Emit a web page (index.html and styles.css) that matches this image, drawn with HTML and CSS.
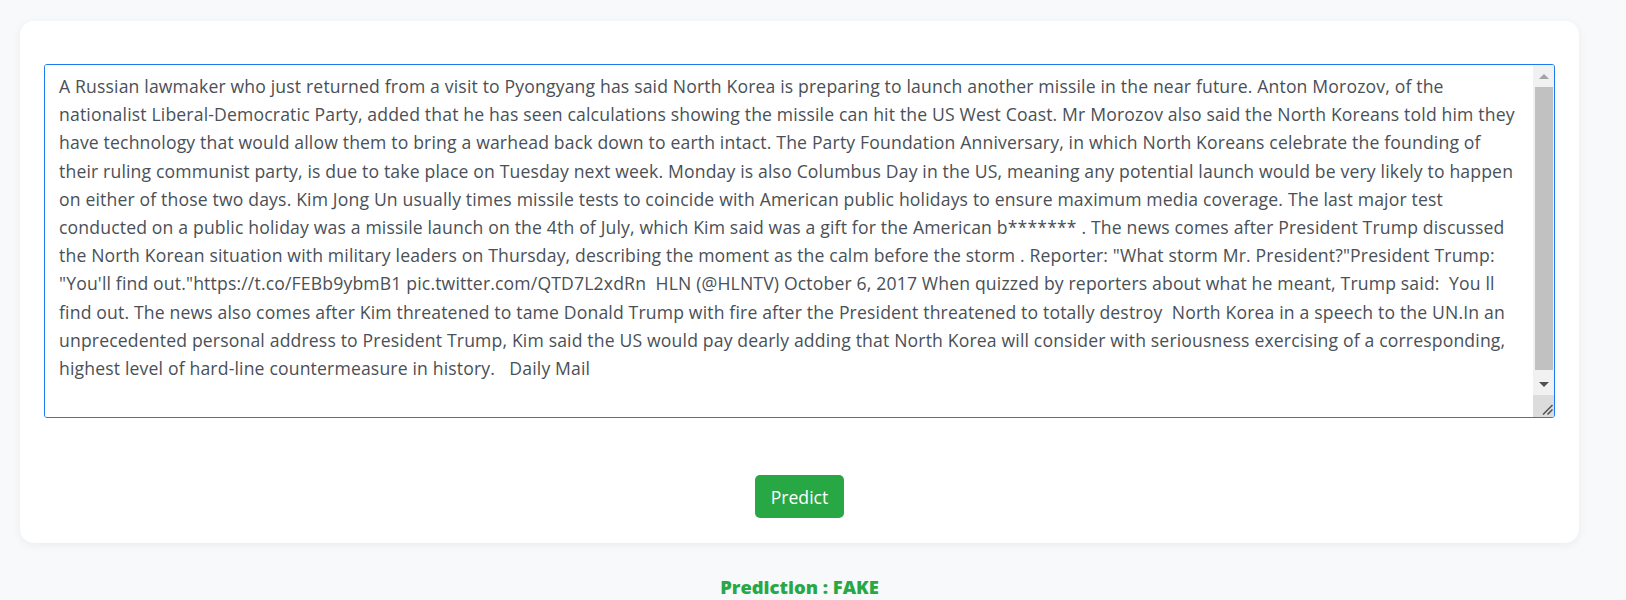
FILE: index.html
```html
<!DOCTYPE html>
<html lang="en">
<head>
<meta charset="utf-8">
<title>Fake News Detector</title>
<link rel="stylesheet" href="styles.css">
</head>
<body>
<main class="page">
  <form class="card">
    <div class="editor">
      <textarea class="news-input" name="news" wrap="off">A Russian lawmaker who just returned from a visit to Pyongyang has said North Korea is preparing to launch another missile in the near future. Anton Morozov, of the
nationalist Liberal-Democratic Party, added that he has seen calculations showing the missile can hit the US West Coast. Mr Morozov also said the North Koreans told him they
have technology that would allow them to bring a warhead back down to earth intact. The Party Foundation Anniversary, in which North Koreans celebrate the founding of
their ruling communist party, is due to take place on Tuesday next week. Monday is also Columbus Day in the US, meaning any potential launch would be very likely to happen
on either of those two days. Kim Jong Un usually times missile tests to coincide with American public holidays to ensure maximum media coverage. The last major test
conducted on a public holiday was a missile launch on the 4th of July, which Kim said was a gift for the American b******* . The news comes after President Trump discussed
the North Korean situation with military leaders on Thursday, describing the moment as the calm before the storm . Reporter: "What storm Mr. President?"President Trump:
"You'll find out."https://t.co/FEBb9ybmB1 pic.twitter.com/QTD7L2xdRn  HLN (@HLNTV) October 6, 2017 When quizzed by reporters about what he meant, Trump said:  You ll
find out. The news also comes after Kim threatened to tame Donald Trump with fire after the President threatened to totally destroy  North Korea in a speech to the UN.In an
unprecedented personal address to President Trump, Kim said the US would pay dearly adding that North Korea will consider with seriousness exercising of a corresponding,
highest level of hard-line countermeasure in history.   Daily Mail
</textarea>
      <div class="scrollbar" aria-hidden="true">
        <div class="sb-btn">
          <svg width="10" height="5" viewBox="0 0 10 5"><path d="M0 5 L5 0 L10 5 Z" fill="#a3a3a3"/></svg>
        </div>
        <div class="sb-track"><div class="sb-thumb"></div></div>
        <div class="sb-btn">
          <svg width="10" height="5" viewBox="0 0 10 5"><path d="M0 0 L10 0 L5 5 Z" fill="#505050"/></svg>
        </div>
        <div class="sb-resizer">
          <svg width="11" height="11" viewBox="0 0 11 11"><path d="M1 10.5 L10.5 1 M5.5 10.5 L10.5 5.5" stroke="#505050" stroke-width="1.5" fill="none"/></svg>
        </div>
      </div>
    </div>
    <div class="actions">
      <button type="button" class="btn-predict">Predict</button>
    </div>
  </form>
  <p class="result">Prediction : FAKE</p>
</main>
</body>
</html>
```
FILE: styles.css
```css
html, body {
  margin: 0;
  padding: 0;
  background: #f8f9fa;
}

body {
  font-family: "Open Sans", "Noto Sans", "Liberation Sans", sans-serif;
  color: #212529;
}

.page {
  padding: 21px 0 0 20px;
  width: 1559px;
}

.card {
  background: #ffffff;
  border-radius: 14px;
  box-shadow: 0 2px 10px rgba(0, 0, 0, 0.06);
  padding: 43px 24px 25px 24px;
  display: flex;
  flex-direction: column;
  height: 522px;
  box-sizing: border-box;
  margin: 0;
}

.editor {
  display: flex;
  box-sizing: border-box;
  height: 354px;
  border: 1px solid #1a7cf0;
  border-radius: 3px;
  overflow: hidden;
  background: #ffffff;
}

.news-input {
  flex: 1;
  display: block;
  box-sizing: border-box;
  min-width: 0;
  height: 100%;
  margin: 0;
  padding: 7px 6px 6px 14px;
  border: none;
  outline: none;
  font-family: "Open Sans", "Noto Sans", "Liberation Sans", sans-serif;
  font-size: 17.6px;
  line-height: 28.2px;
  letter-spacing: 0.16px;
  white-space: pre;
  color: #495057;
  background: #ffffff;
  overflow: hidden;
  resize: none;
}

.scrollbar {
  width: 21px;
  display: flex;
  flex-direction: column;
  background: #f1f1f1;
}

.sb-btn {
  height: 22px;
  display: flex;
  align-items: center;
  justify-content: center;
  flex: none;
}

.sb-track {
  flex: 1;
  padding: 0 1px 3px 2px;
}

.sb-thumb {
  height: 100%;
  background: #c1c1c1;
}

.sb-resizer {
  height: 22px;
  flex: none;
  background: #dcdcdc;
  display: flex;
  align-items: flex-end;
  justify-content: flex-end;
  padding: 0 1px 2px 0;
  box-sizing: border-box;
}

.actions {
  display: flex;
  justify-content: center;
  margin-top: 57px;
}

.btn-predict {
  width: 89px;
  height: 43px;
  padding: 0;
  border: none;
  border-radius: 5px;
  background: #28a745;
  color: #ffffff;
  font-family: "Open Sans", "Noto Sans", "Liberation Sans", sans-serif;
  font-size: 17.6px;
  cursor: pointer;
}

.result {
  margin: 0;
  padding-top: 32px;
  text-align: center;
  font-family: "Open Sans", "DejaVu Sans", sans-serif;
  font-weight: 800;
  font-size: 18.4px;
  line-height: 24px;
  color: #28a745;
}
```
